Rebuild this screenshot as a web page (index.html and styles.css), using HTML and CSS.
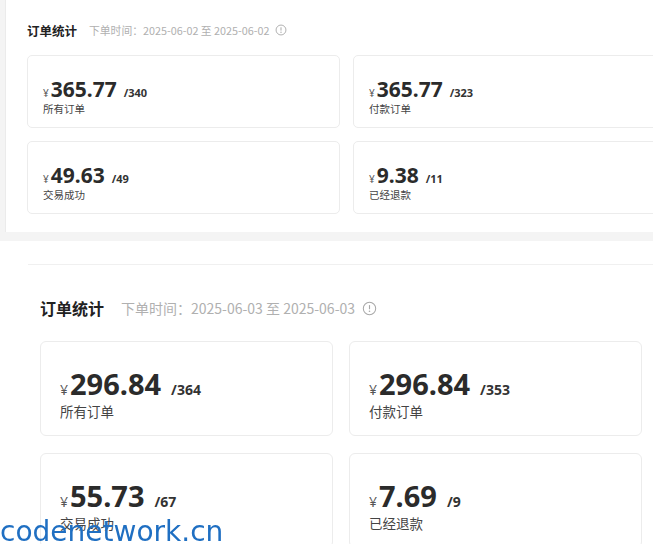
FILE: index.html
```html
<!DOCTYPE html>
<html lang="zh-CN">
<head>
    <meta charset="UTF-8">
    <meta name="viewport" content="width=device-width, initial-scale=1.0">
    <title>订单统计</title>
    <link rel="stylesheet" href="styles.css">
</head>
<body>
    <!-- First capture: 2025-06-02 -->
    <section class="shot shot-a">
        <div class="panel">
            <div class="panel-head">
                <h2 class="panel-title">订单统计</h2>
                <span class="panel-sub">下单时间：2025-06-02 至 2025-06-02</span>
                <svg class="info-icon" viewBox="0 0 16 16"><circle cx="8" cy="8" r="6.6" fill="none" stroke="currentColor" stroke-width="1.2"/><line x1="8" y1="4.4" x2="8" y2="8.8" stroke="currentColor" stroke-width="1.3"/><circle cx="8" cy="11" r="0.9" fill="currentColor"/></svg>
            </div>
            <div class="stats">
                <div class="stat">
                    <div class="stat-value"><span class="yen">¥</span>365.77<span class="count">/340</span></div>
                    <div class="stat-label">所有订单</div>
                </div>
                <div class="stat">
                    <div class="stat-value"><span class="yen">¥</span>365.77<span class="count">/323</span></div>
                    <div class="stat-label">付款订单</div>
                </div>
                <div class="stat">
                    <div class="stat-value"><span class="yen">¥</span>49.63<span class="count">/49</span></div>
                    <div class="stat-label">交易成功</div>
                </div>
                <div class="stat">
                    <div class="stat-value"><span class="yen">¥</span>9.38<span class="count">/11</span></div>
                    <div class="stat-label">已经退款</div>
                </div>
            </div>
        </div>
    </section>

    <!-- Second capture: 2025-06-03 -->
    <section class="shot shot-b">
        <div class="panel">
            <div class="panel-head">
                <h2 class="panel-title">订单统计</h2>
                <span class="panel-sub">下单时间：2025-06-03 至 2025-06-03</span>
                <svg class="info-icon" viewBox="0 0 16 16"><circle cx="8" cy="8" r="6.6" fill="none" stroke="currentColor" stroke-width="1.1"/><line x1="8" y1="4.4" x2="8" y2="8.8" stroke="currentColor" stroke-width="1.2"/><circle cx="8" cy="11" r="0.85" fill="currentColor"/></svg>
            </div>
            <div class="stats">
                <div class="stat">
                    <div class="stat-value"><span class="yen">¥</span>296.84<span class="count">/364</span></div>
                    <div class="stat-label">所有订单</div>
                </div>
                <div class="stat">
                    <div class="stat-value"><span class="yen">¥</span>296.84<span class="count">/353</span></div>
                    <div class="stat-label">付款订单</div>
                </div>
                <div class="stat">
                    <div class="stat-value"><span class="yen">¥</span>55.73<span class="count">/67</span></div>
                    <div class="stat-label">交易成功</div>
                </div>
                <div class="stat">
                    <div class="stat-value"><span class="yen">¥</span>7.69<span class="count">/9</span></div>
                    <div class="stat-label">已经退款</div>
                </div>
            </div>
        </div>
    </section>

    <div class="watermark">codenetwork.cn</div>
</body>
</html>
```

FILE: styles.css
```css
/* Basic reset */
body, html {
    margin: 0;
    padding: 0;
    overflow: hidden;
    background: #fff;
    font-family: "Noto Sans", "Noto Sans CJK SC", sans-serif;
    color: #333;
}

h2 {
    margin: 0;
}

/* Panel header */
.panel-head {
    display: flex;
    align-items: center;
}

.panel-title {
    font-weight: 700;
    color: #222;
}

.panel-sub {
    color: #b0b0b0;
    font-family: "Noto Sans CJK SC", sans-serif;
}

.info-icon {
    color: #a8a8a8;
    flex: none;
}

/* Stat cards */
.stats {
    display: grid;
}

.stat {
    background: #fff;
    border: 1px solid #ececec;
    border-radius: 5px;
    box-sizing: border-box;
}

.stat-value {
    font-weight: 700;
    color: #2b2b2b;
    white-space: nowrap;
}

.yen {
    font-weight: 400;
    color: #555;
    line-height: 1;
}

.count {
    font-weight: 700;
    color: #333;
    line-height: 1;
}

.stat-label {
    color: #444;
    font-family: "Noto Sans CJK SC", sans-serif;
}

/* First capture (smaller) */
.shot-a {
    background: #f4f4f4;
    padding: 0 0 9px 5px;
}

.shot-a .panel {
    background: #fff;
    border-left: 1px solid #ebebeb;
    padding: 22px 0 18px 21px;
}

.shot-a .panel-head {
    height: 16px;
    margin-bottom: 17px;
}

.shot-a .panel-title {
    font-size: 12.5px;
}

.shot-a .panel-sub {
    font-size: 10.8px;
    margin-left: 12px;
}

.shot-a .info-icon {
    width: 12px;
    height: 12px;
    margin-left: 5px;
}

.shot-a .stats {
    grid-template-columns: 313px 313px;
    grid-auto-rows: 73px;
    gap: 13px;
}

.shot-a .stat {
    padding: 20px 15px 0;
}

.shot-a .stat-value {
    font-size: 21px;
    line-height: 26px;
}

.shot-a .yen {
    font-size: 10px;
    margin-right: 2px;
}

.shot-a .count {
    font-size: 11px;
    margin-left: 7px;
}

.shot-a .stat-label {
    font-size: 10.5px;
    line-height: 14px;
}

/* Second capture (larger) */
.shot-b {
    padding-top: 23px;
}

.shot-b .panel {
    margin-left: 28px;
    border-top: 1px solid #f0f0f0;
    padding: 32px 0 0 12px;
}

.shot-b .panel-head {
    height: 22px;
    margin-bottom: 22px;
}

.shot-b .panel-title {
    font-size: 16px;
}

.shot-b .panel-sub {
    font-size: 14px;
    margin-left: 17px;
}

.shot-b .info-icon {
    width: 15px;
    height: 15px;
    margin-left: 7px;
}

.shot-b .stats {
    grid-template-columns: 293px 293px;
    grid-auto-rows: 95px;
    column-gap: 16px;
    row-gap: 17px;
}

.shot-b .stat {
    border-radius: 6px;
    padding: 25px 19px 0;
}

.shot-b .stat-value {
    font-size: 29px;
    line-height: 34px;
}

.shot-b .yen {
    font-size: 14px;
    margin-right: 2px;
}

.shot-b .count {
    font-size: 14px;
    margin-left: 10px;
}

.shot-b .stat-label {
    font-size: 13.5px;
    line-height: 20px;
}

/* Overlay watermark */
.watermark {
    position: fixed;
    left: 0;
    bottom: -1px;
    font-family: "DejaVu Sans", sans-serif;
    font-size: 28px;
    line-height: 26px;
    color: #1f6fc2;
}
```
